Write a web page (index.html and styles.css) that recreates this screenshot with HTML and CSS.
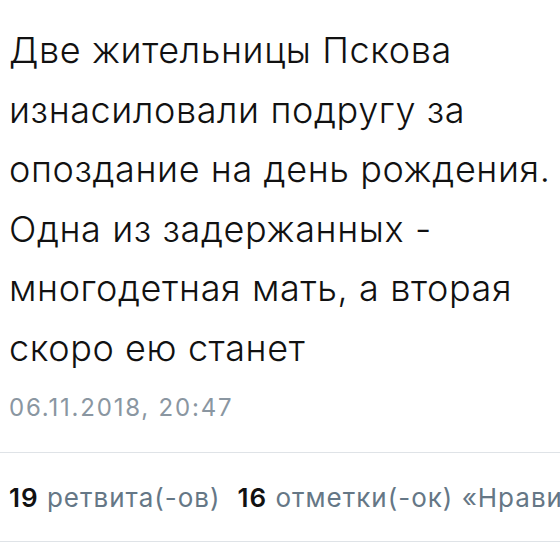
FILE: index.html
```html
<!DOCTYPE html>
<html lang="ru">
<head>
<meta charset="utf-8">
<link rel="stylesheet" href="styles.css">
</head>
<body>
<div class="tweet">
  <p class="text">Две жительницы Пскова изнасиловали подругу за опоздание на день рождения. Одна из задержанных - многодетная мать, а вторая скоро ею станет</p>
  <div class="date">06.11.2018, 20:47</div>
  <div class="stats">
    <span class="stat"><b>19</b> ретвита(-ов)</span>
    <span class="stat"><b>16</b> отметки(-ок) «Нравится»</span>
  </div>
</div>
</body>
</html>
```
FILE: styles.css
```css
html, body {
  margin: 0;
  padding: 0;
  background: #ffffff;
}
body {
  width: 560px;
  height: 560px;
  overflow: hidden;
  font-family: Inter, "Noto Sans", sans-serif;
}
.tweet {
  display: flex;
  flex-direction: column;
}
.text {
  margin: 0;
  padding: 21px 8px 0 9px;
  font-size: 36px;
  font-weight: 350;
  letter-spacing: 0.6px;
  line-height: 59.5px;
  color: #111111;
  width: 560px;
  box-sizing: border-box;
}
.date {
  padding: 15px 8px 0 9px;
  font-size: 24px;
  letter-spacing: 1.8px;
  line-height: 30px;
  color: #8a96a1;
}
.stats {
  margin-top: 29px;
  border-top: 1px solid #dfe3e7;
  border-bottom: 1px solid #dfe3e7;
  height: 88px;
  display: flex;
  align-items: center;
  gap: 17px;
  padding: 0 9px;
  white-space: nowrap;
  overflow: hidden;
  font-size: 26px;
  letter-spacing: 1px;
  color: #657786;
}
.stat b {
  color: #111111;
  font-weight: 600;
}
```
